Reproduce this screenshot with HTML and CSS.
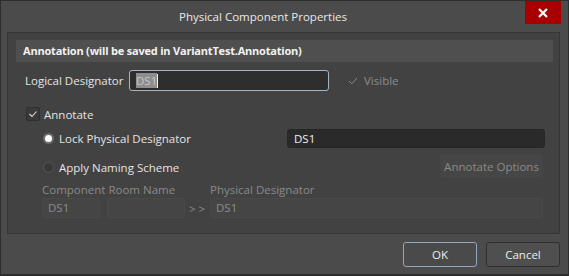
FILE: index.html
```html
<!DOCTYPE html>
<html lang="en">
<head>
    <meta charset="UTF-8">
    <title>Physical Component Properties</title>
    <link rel="stylesheet" href="styles.css">
</head>
<body>
    <div class="dialog">
        <div class="titlebar">
            <div class="title">Physical Component Properties</div>
            <div class="close">
                <svg width="10" height="10" viewBox="0 0 10 10">
                    <path d="M1 1 L9 9 M9 1 L1 9" stroke="#fff" stroke-width="2.2"/>
                </svg>
            </div>
        </div>

        <div class="panel">
            <div class="panel-head">Annotation (will be saved in VariantTest.Annotation)</div>

            <div class="row row-logical">
                <span class="label logical-label">Logical Designator</span>
                <div class="input input-focus"><span class="sel">DS1</span><span class="caret"></span></div>
                <div class="visible">
                    <svg width="10" height="8" viewBox="0 0 10 8">
                        <path d="M1 4 L3.8 6.8 L9 1" fill="none" stroke="#8a8a8a" stroke-width="1"/>
                    </svg>
                    <span>Visible</span>
                </div>
            </div>

            <div class="row row-annotate">
                <span class="checkbox">
                    <svg width="14" height="14" viewBox="0 0 14 14">
                        <path d="M3.5 7 L6 9.5 L10.5 4.5" fill="none" stroke="#dcdcdc" stroke-width="1.1"/>
                    </svg>
                </span>
                <span class="label">Annotate</span>
            </div>

            <div class="row row-lock">
                <span class="radio on"></span>
                <span class="label radio-label">Lock Physical Designator</span>
                <div class="input input-dark">DS1</div>
            </div>

            <div class="row row-apply">
                <span class="radio"></span>
                <span class="label">Apply Naming Scheme</span>
                <button class="btn-disabled">Annotate Options</button>
            </div>

            <div class="row row-captions">
                <span class="caption room-caption">Component Room Name</span>
                <span class="caption">Physical Designator</span>
            </div>

            <div class="row row-fields">
                <div class="field f-comp">DS1</div>
                <div class="field f-room"></div>
                <span class="arrows">&gt;&gt;</span>
                <div class="field f-phys">DS1</div>
            </div>
        </div>

        <div class="footer">
            <button class="btn btn-ok">OK</button>
            <button class="btn">Cancel</button>
        </div>
    </div>
</body>
</html>
```

FILE: styles.css
```css
body {
    margin: 0;
    padding: 0;
    background-color: #2c2c2c;
    font-family: "Open Sans", "Noto Sans", sans-serif;
    font-size: 11.5px;
    color: #e4e4e4;
}

.dialog {
    width: 569px;
    height: 276px;
    box-sizing: border-box;
    border: 1px solid #2e2e2e;
    border-bottom-width: 2px;
    background-color: #4b4b4b;
    display: flex;
    flex-direction: column;
}

.titlebar {
    height: 31px;
    display: flex;
    align-items: flex-start;
}

.title {
    flex: 1;
    text-align: center;
    line-height: 31px;
    color: #e8e8e8;
}

.close {
    width: 36px;
    height: 23px;
    margin-right: 7px;
    background-color: #a80000;
    display: flex;
    justify-content: center;
    align-items: center;
}

.panel {
    margin: 0 8px 0 6px;
    height: 202px;
    box-sizing: border-box;
    border: 1px solid #363636;
    background-color: #424242;
    padding: 7px 6px 0 8px;
}

.panel-head {
    height: 22px;
    line-height: 22px;
    padding-left: 7px;
    background-color: #4f4f4f;
    font-weight: bold;
    font-size: 11px;
    letter-spacing: -0.2px;
    color: #f2f2f2;
}

.row {
    display: flex;
    align-items: center;
}

.label {
    white-space: nowrap;
}

.row-logical {
    margin-top: 8px;
    height: 21px;
    padding-left: 9px;
}

.logical-label {
    width: 104px;
}

.input {
    box-sizing: border-box;
    height: 21px;
    border-radius: 3px;
    display: flex;
    align-items: center;
    padding-left: 6px;
}

.input-focus {
    width: 200px;
    border: 1px solid #a3b6c9;
    background-color: #2e2e2e;
}

.sel {
    background-color: #8e8e8e;
    color: #c6c6c6;
    line-height: 15px;
}

.caret {
    width: 1px;
    height: 14px;
    background-color: #f0f0f0;
}

.visible {
    margin-left: 19px;
    display: flex;
    align-items: center;
    gap: 6px;
    color: #8c8c8c;
}

.row-annotate {
    margin-top: 16px;
    height: 14px;
    padding-left: 10px;
    gap: 4px;
}

.checkbox {
    width: 14px;
    height: 14px;
    box-sizing: border-box;
    border: 1px solid #2f2f2f;
    border-radius: 2px;
    background-color: #3a3a3a;
    display: flex;
}

.checkbox svg {
    margin: -1px;
}

.row-lock {
    margin-top: 8px;
    height: 19px;
    padding-left: 27px;
}

.radio {
    width: 11px;
    height: 11px;
    box-sizing: border-box;
    border-radius: 50%;
    border: 1px solid #545454;
    background-color: #393939;
    margin-right: 5px;
}

.radio.on {
    border: 2px solid #6c6c6c;
    background-color: #ffffff;
}

.radio-label {
    width: 228px;
}

.input-dark {
    width: 258px;
    height: 19px;
    background-color: #2a2a2a;
    border: 1px solid #262626;
    color: #f0f0f0;
}

.row-apply {
    margin-top: 6px;
    height: 24px;
    padding-left: 27px;
}

.row-apply .label,
.row-apply .radio {
    margin-top: 3px;
}

.btn-disabled {
    margin-left: auto;
    margin-right: 10px;
    width: 103px;
    height: 24px;
    border: 1px solid #454545;
    border-radius: 2px;
    background-color: #464646;
    color: #8a8a8a;
    font-family: inherit;
    font-size: 11.5px;
    padding: 0;
}

.row-captions {
    margin-top: 4px;
    height: 14px;
    padding-left: 26px;
    color: #8a8a8a;
}

.room-caption {
    width: 168px;
}

.row-fields {
    margin-top: 2px;
    height: 20px;
    padding-left: 26px;
}

.field {
    box-sizing: border-box;
    height: 20px;
    border: 1px solid #494949;
    border-radius: 2px;
    background-color: #454545;
    color: #8c8c8c;
    padding-left: 5px;
    line-height: 18px;
}

.f-comp {
    width: 58px;
}

.f-room {
    width: 78px;
    margin-left: 7px;
}

.arrows {
    width: 25px;
    text-align: center;
    color: #8a8a8a;
    letter-spacing: 3px;
    padding-left: 2px;
    box-sizing: border-box;
}

.f-phys {
    width: 333px;
}

.footer {
    display: flex;
    justify-content: flex-end;
    gap: 9px;
    padding: 8px 8px 0 0;
}

.btn {
    width: 74px;
    height: 25px;
    border: 1px solid #2f2f2f;
    border-radius: 3px;
    background-color: #4f4f4f;
    color: #ececec;
    font-family: inherit;
    font-size: 11.5px;
    padding: 0;
}

.btn-ok {
    border-color: #90a9c2;
    background-color: #4a4a4a;
}
```
